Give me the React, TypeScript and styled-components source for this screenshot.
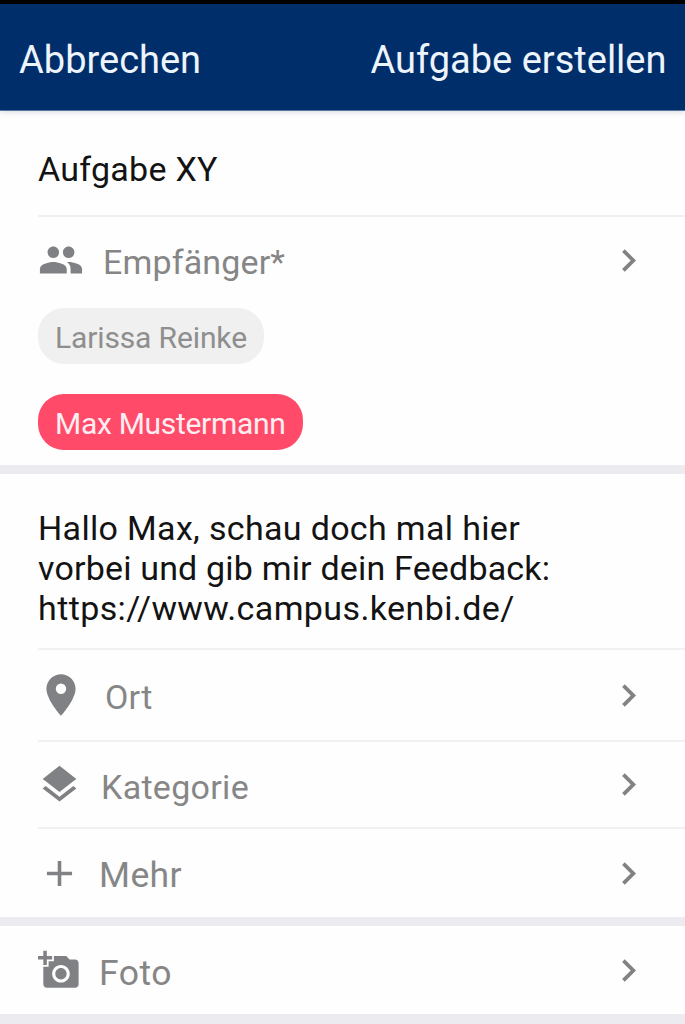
import React from "react";
import styled, { createGlobalStyle } from "styled-components";
import type { IconType } from "react-icons";
import {
  MdAdd,
  MdAddAPhoto,
  MdChevronRight,
  MdLayers,
  MdPeople,
  MdPlace,
} from "react-icons/md";

const GlobalStyle = createGlobalStyle`
  *, *::before, *::after { box-sizing: border-box; }
  html, body { margin: 0; padding: 0; }
  body {
    background: #ebebf0;
    font-family: Roboto, "Liberation Sans", sans-serif;
    -webkit-font-smoothing: antialiased;
  }
`;

const Screen = styled.main`
  display: flex;
  flex-direction: column;
  width: 100%;
  height: 1024px;
  overflow: hidden;
  background: #ebebf0;
`;

const StatusStrip = styled.div`
  height: 4px;
  background: #000;
`;

const Header = styled.header`
  position: relative;
  z-index: 1;
  display: flex;
  justify-content: space-between;
  align-items: center;
  height: 107px;
  padding: 6px 18.5px 0 19px;
  background: #002e6b;
  border-bottom: 1px solid #5277a3;
  box-shadow: 0 1px 6px rgba(0, 20, 60, 0.16);
`;

const HeaderButton = styled.button`
  border: 0;
  padding: 0;
  background: none;
  color: #edf4fb;
  font: 400 38px/46px Roboto, "Liberation Sans", sans-serif;
`;

const Section = styled.section<{ $height: number }>`
  display: flex;
  flex-direction: column;
  height: ${(p) => p.$height}px;
  margin-bottom: 9px;
  padding-left: 38px;
  background: #fefefe;
`;

const Divided = styled.div<{ $height: number; $line?: boolean }>`
  flex: none;
  height: ${(p) => p.$height}px;
  border-bottom: ${(p) => (p.$line ? "2px solid #f1f1f2" : "0")};
`;

const TitleField = styled(Divided)`
  display: flex;
  align-items: center;
  padding-top: 12px;
  color: #131313;
  font-size: 34px;
  line-height: 40px;
  letter-spacing: 0.27px;
`;

const Message = styled(Divided)`
  padding-top: 34px;
  color: #131313;
  font-size: 34px;
  line-height: 40px;
`;

const MessageLine = styled.div<{ $tracking: number }>`
  white-space: nowrap;
  letter-spacing: ${(p) => p.$tracking}px;
`;

const RowBox = styled(Divided)<{ $top: number }>`
  display: flex;
  align-items: flex-start;
  padding-top: ${(p) => p.$top}px;
  padding-right: 34px;
  color: #808184;
`;

const IconSlot = styled.span<{ $width: number; $shift: number }>`
  display: flex;
  align-items: center;
  flex: none;
  width: ${(p) => p.$width}px;
  height: 50px;
  svg { flex: none; margin-left: ${(p) => p.$shift}px; }
`;

const Label = styled.span<{ $tracking: number; $size: number; $top: number }>`
  flex: 1;
  padding-top: ${(p) => p.$top}px;
  color: #868686;
  font-size: ${(p) => p.$size}px;
  line-height: 40px;
  letter-spacing: ${(p) => p.$tracking}px;
`;

const ChevronSlot = styled.span`
  display: flex;
  align-items: center;
  height: 50px;
  color: #828282;
`;

const ChipList = styled.div`
  display: flex;
  flex-direction: column;
  align-items: flex-start;
  gap: 30px;
`;

const Chip = styled.span<{ $active?: boolean; $width: number; $tracking: number }>`
  width: ${(p) => p.$width}px;
  height: 56px;
  padding: 2px 0 0 17px;
  border-radius: 26px;
  background: ${(p) => (p.$active ? "#ff4b69" : "#f0f0f0")};
  color: ${(p) => (p.$active ? "#ffeef1" : "#8e8e8e")};
  font-size: 30px;
  line-height: 55px;
  white-space: nowrap;
  letter-spacing: ${(p) => p.$tracking}px;
`;

type RowProps = {
  icon: IconType;
  iconSize: number;
  iconShift: number;
  slot: number;
  label: string;
  height: number;
  top: number;
  tracking?: number;
  size?: number;
  labelTop?: number;
  line?: boolean;
};

function Row({
  icon: Icon,
  iconSize,
  iconShift,
  slot,
  label,
  height,
  top,
  tracking = 0.2,
  size = 34,
  labelTop = 7,
  line,
}: RowProps) {
  return (
    <RowBox $height={height} $top={top} $line={line}>
      <IconSlot $width={slot} $shift={iconShift}>
        <Icon size={iconSize} />
      </IconSlot>
      <Label $tracking={tracking} $size={size} $top={labelTop}>{label}</Label>
      <ChevronSlot>
        <MdChevronRight size={45} />
      </ChevronSlot>
    </RowBox>
  );
}

export default function App() {
  return (
    <>
      <GlobalStyle />
      <Screen>
        <StatusStrip />
        <Header>
          <HeaderButton>Abbrechen</HeaderButton>
          <HeaderButton>Aufgabe erstellen</HeaderButton>
        </Header>
        <Section $height={354}>
          <TitleField $height={106} $line>Aufgabe XY</TitleField>
          <Row icon={MdPeople} iconSize={46} iconShift={0} slot={65} label="Empfänger*" height={91} top={18} tracking={0.15} />
          <ChipList>
            <Chip $width={226} $tracking={-0.13}>Larissa Reinke</Chip>
            <Chip $width={265} $tracking={-0.3} $active>Max Mustermann</Chip>
          </ChipList>
        </Section>
        <Section $height={443}>
          <Message $height={176} $line>
            <MessageLine $tracking={0.33}>Hallo Max, schau doch mal hier</MessageLine>
            <MessageLine $tracking={0.18}>vorbei und gib mir dein Feedback:</MessageLine>
            <MessageLine $tracking={0.4}>https://www.campus.kenbi.de/</MessageLine>
          </Message>
          <Row icon={MdPlace} iconSize={50} iconShift={-2} slot={67} label="Ort" height={92} top={20} line />
          <Row icon={MdLayers} iconSize={45} iconShift={-1.5} slot={63} label="Kategorie" height={87} top={17.5} tracking={0.3} line />
          <Row icon={MdAdd} iconSize={43} iconShift={-0.5} slot={61} label="Mehr" height={88} top={19} size={35.5} tracking={0.4} />
        </Section>
        <Section $height={88}>
          <Row icon={MdAddAPhoto} iconSize={42.4} iconShift={-0.3} slot={61} label="Foto" height={88} top={19} size={35.5} labelTop={8} tracking={0.5} />
        </Section>
      </Screen>
    </>
  );
}
